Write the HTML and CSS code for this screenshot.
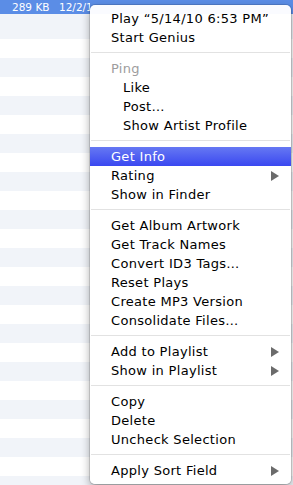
FILE: index.html
```html
<!DOCTYPE html>
<html>
<head>
<meta charset="utf-8">
<link rel="stylesheet" href="styles.css">
</head>
<body>
<div class="list">
  <div class="row selected"><span class="c-size">289 KB</span><span class="c-date">12/2/10 8:38 AM</span></div>
  <div class="row first-alt"></div>
  <div class="row"></div><div class="row alt"></div>
  <div class="row"></div><div class="row alt"></div>
  <div class="row"></div><div class="row alt"></div>
  <div class="row"></div><div class="row alt"></div>
  <div class="row"></div><div class="row alt"></div>
  <div class="row"></div><div class="row alt"></div>
  <div class="row"></div><div class="row alt"></div>
  <div class="row"></div><div class="row alt"></div>
  <div class="row"></div><div class="row alt"></div>
  <div class="row"></div><div class="row alt"></div>
  <div class="row"></div><div class="row alt"></div>
  <div class="row"></div><div class="row alt"></div>
</div>

<div class="menu">
  <div class="item">Play “5/14/10 6:53 PM”</div>
  <div class="item">Start Genius</div>
  <div class="sep"></div>
  <div class="item disabled">Ping</div>
  <div class="item sub">Like</div>
  <div class="item sub">Post…</div>
  <div class="item sub">Show Artist Profile</div>
  <div class="sep"></div>
  <div class="item active">Get Info</div>
  <div class="item">Rating<span class="arrow"></span></div>
  <div class="item">Show in Finder</div>
  <div class="sep"></div>
  <div class="item">Get Album Artwork</div>
  <div class="item">Get Track Names</div>
  <div class="item">Convert ID3 Tags…</div>
  <div class="item">Reset Plays</div>
  <div class="item">Create MP3 Version</div>
  <div class="item">Consolidate Files…</div>
  <div class="sep"></div>
  <div class="item">Add to Playlist<span class="arrow"></span></div>
  <div class="item">Show in Playlist<span class="arrow"></span></div>
  <div class="sep"></div>
  <div class="item">Copy</div>
  <div class="item">Delete</div>
  <div class="item">Uncheck Selection</div>
  <div class="sep"></div>
  <div class="item">Apply Sort Field<span class="arrow"></span></div>
</div>
</body>
</html>
```
FILE: styles.css
```css
html, body {
  margin: 0;
  padding: 0;
  width: 293px;
  height: 485px;
  overflow: hidden;
  background: #fff;
  font-family: "DejaVu Sans", "Liberation Sans", sans-serif;
}

.list {
  display: flex;
  flex-direction: column;
}

.row {
  height: 19px;
  flex: none;
  background: #fff;
}

.row.alt {
  background: #f1f4f9;
}

.row.first-alt {
  height: 25px;
  background: #f1f4f9;
}

.row.selected {
  height: 14px;
  background: #5b8de6;
  color: #fff;
  font-size: 10.5px;
  line-height: 15px;
  display: flex;
  white-space: nowrap;
}

.c-size {
  margin-left: 12px;
  width: 47px;
}

.c-date {
  width: 31px;
  overflow: hidden;
}

.menu {
  position: absolute;
  left: 90px;
  top: 5px;
  width: 201px;
  padding: 4px 0;
  background: rgba(255, 255, 255, 0.97);
  border-radius: 5px;
  box-shadow: 0 0 0 1px rgba(0, 0, 0, 0.12), 0 4px 10px rgba(0, 0, 0, 0.35);
  font-size: 13px;
  letter-spacing: 0.3px;
  color: #000;
}

.item {
  height: 19px;
  line-height: 19px;
  padding: 0 12px 0 21px;
  display: flex;
  justify-content: space-between;
  align-items: center;
  white-space: nowrap;
}

.item.sub {
  padding-left: 33px;
}

.item.disabled {
  color: #9d9d9d;
}

.item.active {
  background: linear-gradient(#6678f3, #3a48f0);
  color: #fff;
}

.arrow {
  width: 0;
  height: 0;
  border-top: 5px solid transparent;
  border-bottom: 5px solid transparent;
  border-left: 8px solid #6b6b6b;
}

.sep {
  height: 1px;
  margin: 5px 1px 6px;
  background: #e2e2e2;
}
```
